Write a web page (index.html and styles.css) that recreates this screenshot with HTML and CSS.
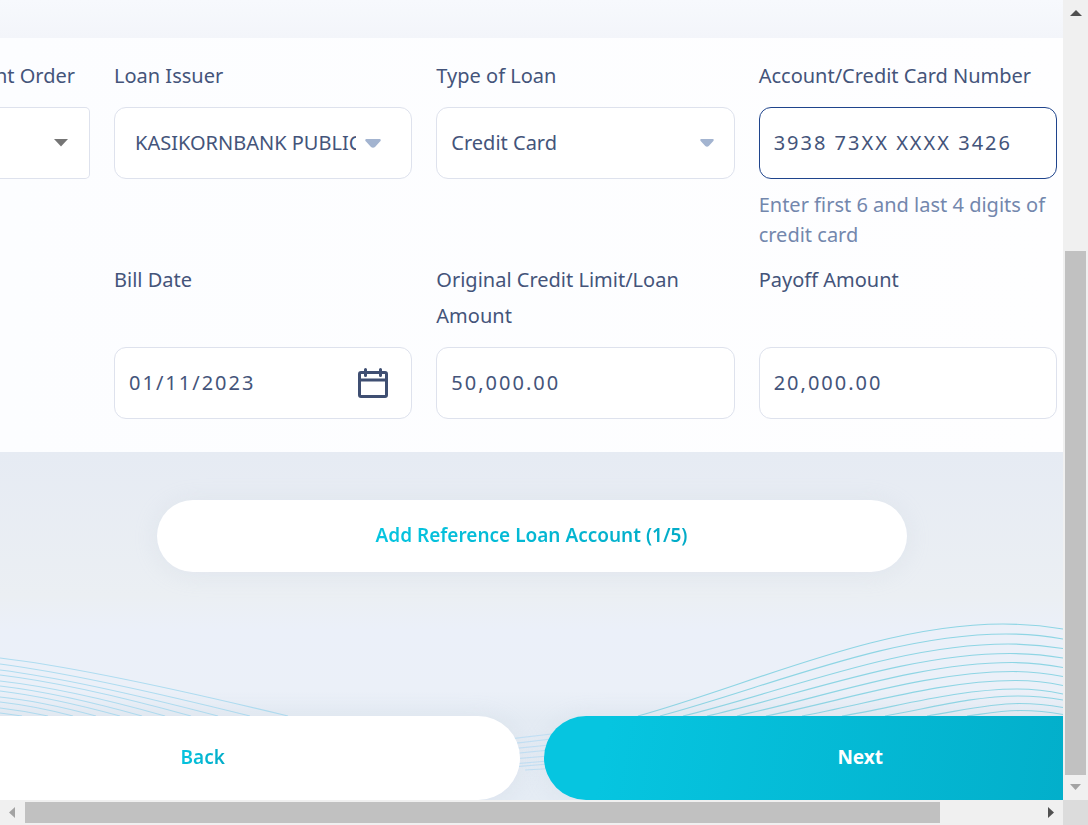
FILE: index.html
```html
<!DOCTYPE html>
<html lang="en">
<head>
<meta charset="utf-8">
<meta name="viewport" content="width=device-width, initial-scale=1">
<title>Reference Loan Account</title>
<link rel="stylesheet" href="styles.css">
</head>
<body>
<div class="window">
  <main class="page">
    <svg class="waves" viewBox="0 600 1063 200" preserveAspectRatio="none" aria-hidden="true">
      <g class="waves-left">
        <path d="M0 658Q93 669 288 716"/>
        <path d="M0 664Q85 675 250 716"/>
        <path d="M0 670Q80 680 218 716"/>
        <path d="M0 675Q75 684 191 716"/>
        <path d="M0 681Q70 689 165 716"/>
        <path d="M0 686Q60 693 142 716"/>
        <path d="M0 691Q50 697 120 716"/>
        <path d="M0 697Q40 701 96 716"/>
        <path d="M0 702Q35 706 73 716"/>
        <path d="M0 708Q25 711 48 716"/>
        <path d="M0 713L22 716"/>
      </g>
      <g class="waves-middle">
        <path d="M500 740L560 733"/>
        <path d="M500 745L560 738"/>
        <path d="M500 750L560 744"/>
        <path d="M500 755L560 749"/>
        <path d="M500 760L560 755"/>
        <path d="M500 765L560 760"/>
        <path d="M500 768L560 763"/>
        <path d="M525 770L560 768"/>
      </g>
      <g class="waves-right">
        <path d="M638 716C750 685 880 624 1003 624Q1033 624 1063 629"/>
        <path d="M660 716C766 688 889 634 1006 634Q1035 634 1063 639"/>
        <path d="M683 716C783 692 898 644 1008 644Q1036 644 1063 648.500"/>
        <path d="M707 716C800 695 908 653.500 1010 653.500Q1037 653.500 1063 658"/>
        <path d="M737 716C821 698 919 662.500 1012 662.500Q1038 662.500 1063 667.500"/>
        <path d="M766 716C842 701 930 671.500 1013 671.500Q1038 671.500 1063 676.500"/>
        <path d="M802 716C867 704 943 680.500 1015 680.500Q1039 680.500 1063 685.500"/>
        <path d="M842 716C896 707 958 689 1017 689Q1040 689 1063 694"/>
        <path d="M885 716C926 709 973 696 1018 696Q1041 696 1063 700"/>
        <path d="M927 716C955 712 988 703.500 1019 703.500Q1041 703.500 1063 707.500"/>
        <path d="M967 716C983 714 1002 710.500 1020 710.500Q1042 710.500 1063 714.500"/>
      </g>
    </svg>

    <form class="loan-form">
      <section class="panel">
        <div class="field field-cut">
          <label class="label" for="order">nt Order</label>
          <div class="control control-plain">
            <select class="input" id="order"><option></option></select>
            <svg class="caret caret-gray" viewBox="0 0 14 8" aria-hidden="true"><path d="M0 0H14L7 7.500Z"/></svg>
          </div>
        </div>
        <div class="field">
          <label class="label" for="issuer">Loan Issuer</label>
          <div class="control control-issuer">
            <select class="input" id="issuer"><option>KASIKORNBANK PUBLIC</option></select>
            <svg class="caret caret-wide" viewBox="0 0 16 9" aria-hidden="true"><path d="M1 0H15Q16.500 1 15 2.500L10 8Q8 9.500 6 8L1 2.500Q-.5 1 1 0Z"/></svg>
          </div>
        </div>
        <div class="field">
          <label class="label" for="type">Type of Loan</label>
          <div class="control control-type">
            <select class="input" id="type"><option>Credit Card</option></select>
            <svg class="caret" viewBox="0 0 16 9" aria-hidden="true"><path d="M1 0H15Q16.500 1 15 2.500L10 8Q8 9.500 6 8L1 2.500Q-.5 1 1 0Z"/></svg>
          </div>
        </div>
        <div class="field">
          <label class="label" for="account">Account/Credit Card Number</label>
          <div class="control control-active">
            <input class="input input-number" id="account" type="text" value="3938 73XX XXXX 3426" aria-describedby="account-hint">
          </div>
          <p class="hint" id="account-hint">Enter first 6 and last 4 digits of credit card</p>
        </div>

        <div class="field field-second field-date">
          <label class="label" for="bill-date">Bill Date</label>
          <div class="control">
            <input class="input input-number" id="bill-date" type="text" value="01/11/2023">
            <button class="calendar" type="button" aria-label="Choose date">
              <svg viewBox="0 0 30 30" aria-hidden="true"><path d="M3 4.500H27Q28.500 4.500 28.500 6V27Q28.500 28.500 27 28.500H3Q1.500 28.500 1.500 27V6Q1.500 4.500 3 4.500ZM1.500 12H28.500M7.500 1.500V7.500M22.500 1.500V7.500"/></svg>
            </button>
          </div>
        </div>
        <div class="field field-second">
          <label class="label" for="limit">Original Credit Limit/Loan Amount</label>
          <div class="control">
            <input class="input input-number" id="limit" type="text" value="50,000.00">
          </div>
        </div>
        <div class="field field-second">
          <label class="label" for="payoff">Payoff Amount</label>
          <div class="control">
            <input class="input input-number" id="payoff" type="text" value="20,000.00">
          </div>
        </div>
      </section>

      <button class="button button-add" type="button"><span class="tint">Add Reference Loan Account (1/5)</span></button>

      <div class="actions">
        <button class="button button-back" type="button"><span class="tint">Back</span></button>
        <button class="button button-next" type="button">Next</button>
      </div>
    </form>
  </main>

  <div class="bar bar-vertical" aria-hidden="true">
    <svg class="arrow arrow-dark" viewBox="0 0 25 25"><path d="M7 16H19L13 10Z"/></svg>
    <div class="space-before"></div>
    <div class="thumb"></div>
    <svg class="arrow" viewBox="0 0 25 25"><path d="M7 9H18L12.500 15Z"/></svg>
  </div>
  <div class="bar bar-horizontal" aria-hidden="true">
    <svg class="arrow" viewBox="0 0 25 25"><path d="M15 7V18L9 12.500Z"/></svg>
    <div class="thumb"></div>
    <div class="space-after"></div>
    <svg class="arrow arrow-dark" viewBox="0 0 25 25"><path d="M10 7V18L16 12.500Z"/></svg>
  </div>
  <div class="corner"></div>
</div>
</body>
</html>
```
FILE: styles.css
```css
* { box-sizing: border-box; }

body {
  margin: 0;
  font-family: "Noto Sans", sans-serif;
  font-size: 20px;
  color: #44547a;
}

.window {
  display: grid;
  grid-template-columns: minmax(0, 1fr) 25px;
  grid-template-rows: 1fr 25px;
  min-height: 100vh;
}

.page {
  position: relative;
  overflow: hidden;
  padding-top: 38px;
  background: linear-gradient(#f7f9fd 0, #f3f5fa 38px, #e6ebf3 452px, #ebeff3 595px, #ebf0f9 630px, #ebf0f8 690px, #e4ebf3 720px, #e5ecf4 100%);
}

.waves {
  position: absolute;
  left: 0;
  bottom: 0;
  width: 100%;
  height: 200px;
  fill: none;
  stroke-width: 1.2;
}

.waves-left { stroke: #aedcf0; }
.waves-middle { stroke: #c2e0f4; }
.waves-right { stroke: #8ed5e4; }

.loan-form {
  position: relative;
  display: flex;
  flex-direction: column;
}

.panel {
  display: grid;
  grid-template-columns: 90px repeat(3, minmax(0, 1fr));
  gap: 12px 24px;
  padding: 20px 6px 33px 0;
  background: linear-gradient(90deg, #fcfdff, #fefeff);
}

.field { min-width: 0; }

.label {
  display: block;
  margin-bottom: 13px;
  line-height: 36px;
}

.field-cut .label {
  display: flex;
  justify-content: flex-end;
  padding-right: 15px;
  white-space: nowrap;
}

.field-second .label { min-height: 72px; }
.field-date { grid-column: 2; }

.control {
  display: flex;
  align-items: center;
  height: 72px;
  padding: 0 14px;
  border: 1px solid #dee2ed;
  border-radius: 12px;
  background: #fff;
}

.control-plain { padding-right: 21px; border-left: 0; border-radius: 0 5px 5px 0; }
.control-issuer { padding: 0 30px 0 20px; gap: 9px; }
.control-type { padding-right: 20px; }
.control-active { border-color: #1f448c; }

.input {
  flex: 1;
  min-width: 0;
  width: 100%;
  height: 48px;
  padding: 0 0 2px;
  border: 0;
  outline: 0;
  background: transparent;
  color: inherit;
  font: inherit;
  appearance: none;
}

.input-number { letter-spacing: 2px; }

.caret {
  flex: none;
  width: 14px;
  height: 8px;
  fill: #a3b4d0;
}

.caret-gray { fill: #757575; }
.caret-wide { width: 16px; height: 9px; }

.calendar {
  flex: none;
  width: 30px;
  height: 30px;
  margin-right: 9px;
  padding: 0;
  border: 0;
  background: none;
}

.calendar svg {
  display: block;
  width: 30px;
  height: 30px;
  fill: none;
  stroke: #3f4f72;
  stroke-width: 3;
  stroke-linecap: round;
}

.hint {
  margin: 11px 0 0;
  line-height: 30px;
  color: #7387ad;
}

.button {
  padding: 0 0 2px;
  border: 0;
  background: #fff;
  color: #fff;
  font: inherit;
  font-size: 19px;
  font-weight: 600;
  box-shadow: 0 2px 24px #b8c4d833;
}

.button-add {
  align-self: center;
  width: 750px;
  max-width: 100%;
  height: 72px;
  margin: 48px 0 144px;
  border-radius: 36px;
}

/* The action row is wider than the visible part of the page. */
.actions {
  display: grid;
  grid-template-columns: 1fr 1fr;
  gap: 24px;
  margin: 0 -114px;
}

.button-back,
.button-next {
  height: 84px;
  border-radius: 42px;
}

.button-next {
  background: linear-gradient(100deg, #06c5e0 10%, #02abc7 95%);
  font-weight: 700;
}

.tint {
  background: linear-gradient(100deg, #06c5e0, #02abc7);
  background-clip: text;
  color: transparent;
}

.bar { display: flex; background: #f0f0f0; }
.bar-vertical { flex-direction: column; }
.thumb { background: #c1c1c1; }
.bar-vertical .thumb { flex: 524 0 0; margin: 0 2px; }
.bar-horizontal .thumb { flex: 915 0 0; margin: 2px 0; }
.space-before { flex: 226 0 0; }
.space-after { flex: 98 0 0; }
.arrow { flex: none; width: 25px; height: 25px; fill: #a3a3a3; }
.arrow-dark { fill: #505050; }
.corner { background: #dcdcdc; }
```
